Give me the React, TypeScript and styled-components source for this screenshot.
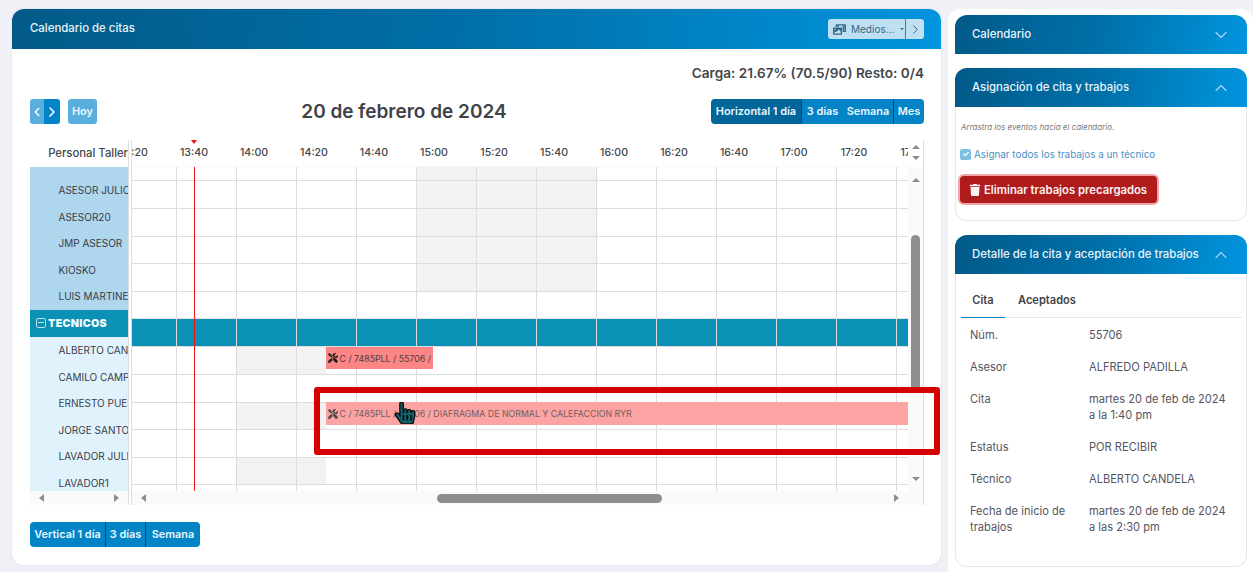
import React from 'react'
import styled, {createGlobalStyle} from 'styled-components'
import {ChevronDown, ChevronLeft, ChevronRight, ChevronUp} from 'lucide-react'
import {FaPhotoVideo, FaTools, FaTrash, FaHandPointer, FaCheck} from 'react-icons/fa'

const GlobalStyle = createGlobalStyle`
  html, body {
    margin: 0;
    padding: 0;
    height: 572px;
    overflow: hidden;
    background: #eff1f6;
    font-family: "Inter", "Open Sans", sans-serif;
  }
  * { box-sizing: border-box; }
`

const HEAD_GRADIENT = 'linear-gradient(100deg, #025a88 0%, #0070a9 50%, #0095de 100%)'

const times = ['13:20', '13:40', '14:00', '14:20', '14:40', '15:00', '15:20', '15:40', '16:00', '16:20', '16:40', '17:00', '17:20', '17:40']

const advisers = ['ASESOR JULIO', 'ASESOR20', 'JMP ASESOR', 'KIOSKO', 'LUIS MARTINEZ']
const technicians = ['ALBERTO CANDELA', 'CAMILO CAMPOS', 'ERNESTO PUENTE', 'JORGE SANTOS', 'LAVADOR JULIO', 'LAVADOR1']

type Shade = 'none' | 'afternoon' | 'morning'

interface RowData {
  height: number
  shade?: Shade
  teal?: boolean
  event?: {top: number; height: number; width: number; faded?: boolean; text: string}
}

const rows: RowData[] = [
  {height: 14, shade: 'afternoon'},
  {height: 28, shade: 'afternoon'},
  {height: 28, shade: 'afternoon'},
  {height: 27, shade: 'afternoon'},
  {height: 28, shade: 'afternoon'},
  {height: 27},
  {height: 28, teal: true},
  {height: 28, shade: 'morning', event: {top: 0, height: 22, width: 107, text: 'C / 7485PLL / 55706 / DIAFRAGMA DE NORMAL Y CALEFACCION RYR'}},
  {height: 28},
  {height: 27, shade: 'morning', event: {top: -1, height: 23, width: 582, faded: true, text: 'C / 7485PLL / 55706 / DIAFRAGMA DE NORMAL Y CALEFACCION RYR'}},
  {height: 28},
  {height: 27, shade: 'morning'},
  {height: 7},
]

const details = [
  {label: 'Núm.', value: ['55706']},
  {label: 'Asesor', value: ['ALFREDO PADILLA']},
  {label: 'Cita', value: ['martes 20 de feb de 2024', 'a la 1:40 pm']},
  {label: 'Estatus', value: ['POR RECIBIR']},
  {label: 'Técnico', value: ['ALBERTO CANDELA']},
  {label: 'Fecha de inicio de trabajos', value: ['martes 20 de feb de 2024', 'a las 2:30 pm']},
]

const cellShade = (shade: Shade | undefined, index: number): string => {
  if (shade === 'afternoon' && index >= 5 && index <= 7) return 'full'
  if (shade === 'morning' && index === 2) return 'full'
  if (shade === 'morning' && index === 3) return 'half'
  return 'none'
}

const App: React.FC = () => {
  return (
    <Screen>
      <GlobalStyle />
      <MainCard>
        <MainHeader>
          <HeaderTitle>Calendario de citas</HeaderTitle>
          <HeaderActions>
            <MediaButton>
              <FaPhotoVideo size={13} />
              <span>Medios...</span>
              <Caret />
            </MediaButton>
            <MediaNext><ChevronRight size={15} strokeWidth={1.6} /></MediaNext>
          </HeaderActions>
        </MainHeader>
        <MainBody>
          <LoadLine>Carga: 21.67% (70.5/90) Resto: 0/4</LoadLine>
          <Toolbar>
            <NavGroup>
              <NavButton $muted><ChevronLeft size={16} strokeWidth={2.4} /></NavButton>
              <NavButton><ChevronRight size={16} strokeWidth={2.4} /></NavButton>
              <TodayButton>Hoy</TodayButton>
            </NavGroup>
            <DateTitle>20 de febrero de 2024</DateTitle>
            <ViewGroup>
              <ViewButton $active $divider $width={91}>Horizontal 1 día</ViewButton>
              <ViewButton $width={41}>3 días</ViewButton>
              <ViewButton $divider $width={51}>Semana</ViewButton>
              <ViewButton $width={30}>Mes</ViewButton>
            </ViewGroup>
          </Toolbar>

          <Scheduler>
            <ResourceColumn>
              <ResourceHead>Personal Taller</ResourceHead>
              <ResourceList>
                <AdviserBlock>
                  {advisers.map((name) => <ResourceRow key={name}>{name}</ResourceRow>)}
                </AdviserBlock>
                <GroupRow><MinusBox />TECNICOS</GroupRow>
                <div>
                  {technicians.map((name) => <ResourceRow key={name}>{name}</ResourceRow>)}
                </div>
              </ResourceList>
              <ScrollTrack>
                <ArrowLeft />
                <ArrowRight />
              </ScrollTrack>
            </ResourceColumn>

            <Splitter />

            <Timeline>
              <TimeHead>
                <TimeTrack>
                  {times.map((t) => <TimeLabel key={t}>{t}</TimeLabel>)}
                </TimeTrack>
                <NowMark />
              </TimeHead>
              <Grid>
                {rows.map((row, i) => (
                  <GridRow key={i} $height={row.height} $teal={row.teal} $last={i === rows.length - 1}>
                    {Array.from({length: 14}).map((_, c) => (
                      <GridCell key={c} $first={c === 0} $end={c === 13} $shade={cellShade(row.shade, c)} />
                    ))}
                    {row.event && (
                      <EventBar $top={row.event.top} $height={row.event.height} $width={row.event.width} $faded={row.event.faded}>
                        <FaTools size={10} />
                        <span>{row.event.text}</span>
                      </EventBar>
                    )}
                  </GridRow>
                ))}
                <NowLine />
              </Grid>
              <ScrollTrack>
                <ArrowLeft />
                <HorizontalThumb />
                <ArrowRight />
              </ScrollTrack>
            </Timeline>

            <VerticalRail>
              <RailHead>
                <ArrowUp />
                <ArrowDown />
              </RailHead>
              <RailTrack>
                <ArrowUp />
                <VerticalThumb />
                <ArrowDown />
              </RailTrack>
            </VerticalRail>
          </Scheduler>

          <FooterViews>
            <ViewButton $divider $width={76}>Vertical 1 día</ViewButton>
            <ViewButton $divider $width={40}>3 días</ViewButton>
            <ViewButton $width={54}>Semana</ViewButton>
          </FooterViews>
        </MainBody>
      </MainCard>

      <SidePanel>
        <SideCard $flat>
          <SideHeader>
            <span>Calendario</span>
            <ChevronDown size={20} strokeWidth={1.4} />
          </SideHeader>
        </SideCard>

        <SideCard $height={153}>
          <SideHeader>
            <span>Asignación de cita y trabajos</span>
            <ChevronUp size={20} strokeWidth={1.4} />
          </SideHeader>
          <HintText>Arrastra los eventos hacia el calendario.</HintText>
          <CheckLine>
            <CheckBox><FaCheck size={6} /></CheckBox>
            Asignar todos los trabajos a un técnico
          </CheckLine>
          <DangerButton><FaTrash size={12} />Eliminar trabajos precargados</DangerButton>
        </SideCard>

        <SideCard $height={332}>
          <SideHeader>
            <span>Detalle de la cita y aceptación de trabajos</span>
            <ChevronUp size={20} strokeWidth={1.4} />
          </SideHeader>
          <Tabs>
            <Tab $active>Cita</Tab>
            <Tab>Aceptados</Tab>
          </Tabs>
          <DetailList>
            {details.map((d) => (
              <DetailRow key={d.label}>
                <DetailLabel>{d.label}</DetailLabel>
                <DetailValue>
                  {d.value.map((line) => <div key={line}>{line}</div>)}
                </DetailValue>
              </DetailRow>
            ))}
          </DetailList>
        </SideCard>
      </SidePanel>

      <Highlight />
      <HandCursor><FaHandPointer size={22} /></HandCursor>
    </Screen>
  )
}

const Screen = styled.div`
  position: relative;
  display: flex;
  gap: 7px;
  height: 572px;
  padding: 9px 0 0 12px;
`

const MainCard = styled.section`
  width: 929px;
  height: 556px;
  background: #fff;
  border-radius: 12px;
  overflow: hidden;
  box-shadow: 0 0 0 1px #e6e9ef;
`

const MainHeader = styled.header`
  display: flex;
  align-items: center;
  justify-content: space-between;
  height: 40px;
  padding: 0 17px 0 18px;
  background: ${HEAD_GRADIENT};
`

const HeaderTitle = styled.div`
  margin-bottom: 2px;
  color: #e9f4fa;
  font-size: 11.4px;
  font-weight: 500;
`

const HeaderActions = styled.div`
  display: flex;
  gap: 1px;
`

const MediaButton = styled.div`
  display: flex;
  align-items: center;
  gap: 5px;
  width: 77px;
  height: 20px;
  padding-left: 5px;
  background: #bfdff2;
  border-radius: 3px 0 0 3px;
  color: #33688a;
  font-size: 10px;
  font-weight: 400;
`

const Caret = styled.i`
  width: 0;
  height: 0;
  margin-left: 1px;
  border: 2.5px solid transparent;
  border-top-color: #33688a;
  border-bottom: 0;
`

const MediaNext = styled.div`
  display: flex;
  align-items: center;
  justify-content: center;
  width: 18px;
  height: 20px;
  background: #bfdff2;
  border-radius: 0 3px 3px 0;
  color: #33688a;
`

const MainBody = styled.div`
  padding: 14px 17px 0 18px;
`

const LoadLine = styled.div`
  height: 20px;
  line-height: 20px;
  text-align: right;
  color: #43464b;
  font-size: 13.6px;
  font-weight: 600;
`

const Toolbar = styled.div`
  display: flex;
  align-items: center;
  justify-content: space-between;
  height: 25px;
  margin-top: 16px;
`

const NavGroup = styled.div`
  display: flex;
  align-items: stretch;
  height: 25px;
`

const NavButton = styled.div<{$muted?: boolean}>`
  display: flex;
  align-items: center;
  justify-content: center;
  width: ${(p) => (p.$muted ? 14 : 16)}px;
  background: ${(p) => (p.$muted ? '#58afdc' : '#0284c7')};
  border-radius: ${(p) => (p.$muted ? '3px 0 0 3px' : '0 3px 3px 0')};
  color: #fff;
`

const TodayButton = styled.div`
  display: flex;
  align-items: center;
  justify-content: center;
  width: 29px;
  margin-left: 8px;
  padding-bottom: 1px;
  background: #58afdc;
  border-radius: 3px;
  color: #eaf6fc;
  font-size: 11px;
  font-weight: 600;
`

const DateTitle = styled.h2`
  margin: 0;
  color: #3f4247;
  font-size: 19px;
  font-weight: 600;
`

const ViewGroup = styled.div`
  display: flex;
  height: 25px;
  border-radius: 4px;
  overflow: hidden;
`

const FooterViews = styled(ViewGroup)`
  width: 170px;
  margin-top: 17px;
`

const ViewButton = styled.div<{$active?: boolean; $divider?: boolean; $width: number}>`
  display: flex;
  align-items: center;
  justify-content: center;
  width: ${(p) => p.$width}px;
  padding-bottom: 1px;
  background: ${(p) => (p.$active ? '#02669b' : '#0284c7')};
  border-right: ${(p) => (p.$divider ? '1px solid #024a70' : '0')};
  color: #e8f6fe;
  font-size: 10.9px;
  font-weight: 600;
  white-space: nowrap;
`

const Scheduler = styled.div`
  display: flex;
  height: 365px;
  margin-top: 16px;
  border-right: 1px solid #dddddd;
`

const ResourceColumn = styled.div`
  display: flex;
  flex-direction: column;
  width: 98px;
`

const ResourceHead = styled.div`
  display: flex;
  align-items: center;
  justify-content: flex-end;
  height: 25px;
  margin-bottom: 2px;
  color: #43464b;
  font-size: 11.3px;
  font-weight: 500;
  white-space: nowrap;
`

const ResourceList = styled.div`
  flex: 1;
  overflow: hidden;
  background: #e0f3fc;
`

const AdviserBlock = styled.div`
  height: 143px;
  padding-top: 10px;
  background: #aed6ed;
`

const ResourceRow = styled.div`
  height: 26.6px;
  line-height: 26px;
  padding-left: 28.5px;
  color: #3b3b4a;
  font-size: 10px;
  white-space: nowrap;
  overflow: hidden;
`

const GroupRow = styled.div`
  display: flex;
  align-items: center;
  gap: 2px;
  height: 27px;
  padding-left: 6px;
  padding-bottom: 1px;
  background: #0a91b5;
  color: #f2fbfe;
  font-size: 10.7px;
  font-weight: 900;
  letter-spacing: 0.3px;
`

const MinusBox = styled.i`
  position: relative;
  width: 10px;
  height: 10px;
  border: 1px solid #bfe0ea;
  border-radius: 2px;

  &::after {
    content: '';
    position: absolute;
    left: 1px;
    right: 1px;
    top: 3px;
    height: 1px;
    background: #bfe0ea;
  }
`

const Splitter = styled.div`
  width: 4px;
  border-left: 1px solid #dddddd;
  border-right: 1px solid #dddddd;
`

const Timeline = styled.div`
  display: flex;
  flex-direction: column;
  width: 776px;
`

const TimeHead = styled.div`
  position: relative;
  height: 27px;
  overflow: hidden;
  border-bottom: 1px solid #f7f7f7;
`

const TimeTrack = styled.div`
  display: flex;
  margin-left: -28px;
  height: 26px;
`

const TimeLabel = styled.div`
  flex: 0 0 60px;
  line-height: 25px;
  text-align: center;
  color: #43464b;
  font-size: 10.6px;
  font-weight: 500;
`

const NowMark = styled.i`
  position: absolute;
  left: 59px;
  top: 0;
  width: 0;
  height: 0;
  border: 3px solid transparent;
  border-top: 4px solid #e81c1c;
  border-bottom: 0;
`

const Grid = styled.div`
  position: relative;
  height: 324px;
  overflow: hidden;
`

const GridRow = styled.div<{$height: number; $teal?: boolean; $last?: boolean}>`
  position: relative;
  display: flex;
  height: ${(p) => p.$height}px;
  background: ${(p) => (p.$teal ? '#0a91b5' : '#fff')};
  border-bottom: ${(p) => (p.$last ? '0' : '1px solid #dddddd')};
`

const GridCell = styled.div<{$first?: boolean; $end?: boolean; $shade: string}>`
  flex: 0 0 ${(p) => (p.$first ? 45 : p.$end ? 11 : 60)}px;
  border-right: ${(p) => (p.$end ? '0' : '1px solid #dddddd')};
  background: ${(p) =>
    p.$shade === 'full'
      ? '#f2f2f2'
      : p.$shade === 'half'
        ? 'linear-gradient(to right, #f2f2f2 29px, transparent 29px)'
        : 'transparent'};
`

const EventBar = styled.div<{$top: number; $height: number; $width: number; $faded?: boolean}>`
  position: absolute;
  z-index: 1;
  left: 194px;
  top: ${(p) => p.$top}px;
  display: flex;
  align-items: center;
  gap: 1.5px;
  height: ${(p) => p.$height}px;
  width: ${(p) => p.$width}px;
  padding-left: 2px;
  overflow: hidden;
  white-space: nowrap;
  background: ${(p) => (p.$faded ? '#fca3a3' : '#fc8585')};
  color: ${(p) => (p.$faded ? '#6f6060' : '#4e3f3f')};
  font-size: 8.8px;

  svg {
    flex: none;
    color: ${(p) => (p.$faded ? '#4a4a4a' : '#222')};
  }
`

const NowLine = styled.i`
  position: absolute;
  left: 62px;
  top: 0;
  bottom: 0;
  width: 1px;
  background: #f01414;
`

const ScrollTrack = styled.div`
  position: relative;
  display: flex;
  align-items: center;
  justify-content: space-between;
  height: 14px;
  padding: 0 9px;
  background: #fafafa;
`

const ArrowLeft = styled.i`
  width: 0;
  height: 0;
  border: 4px solid transparent;
  border-right: 5px solid #8c8c8c;
  border-left: 0;
`

const ArrowRight = styled.i`
  width: 0;
  height: 0;
  border: 4px solid transparent;
  border-left: 5px solid #8c8c8c;
  border-right: 0;
`

const ArrowUp = styled.i`
  flex: none;
  width: 0;
  height: 0;
  border: 4px solid transparent;
  border-bottom: 4px solid #8c8c8c;
  border-top: 0;
`

const ArrowDown = styled.i`
  flex: none;
  width: 0;
  height: 0;
  border: 4px solid transparent;
  border-top: 4px solid #8c8c8c;
  border-bottom: 0;
`

const HorizontalThumb = styled.div`
  position: absolute;
  left: 305px;
  top: 3px;
  width: 225px;
  height: 9px;
  border-radius: 5px;
  background: #8e8e8e;
`

const VerticalRail = styled.div`
  display: flex;
  flex-direction: column;
  width: 15px;
`

const RailHead = styled.div`
  display: flex;
  flex-direction: column;
  align-items: center;
  gap: 7px;
  height: 27px;
  padding-top: 5px;
  background: #fff;
`

const RailTrack = styled.div`
  position: relative;
  display: flex;
  flex-direction: column;
  align-items: center;
  justify-content: space-between;
  height: 338px;
  padding: 11px 0 24px;
  background: #fafafa;
`

const VerticalThumb = styled.div`
  position: absolute;
  left: 3px;
  top: 68px;
  width: 9px;
  height: 155px;
  border-radius: 5px 5px 0 0;
  background: #8e8e8e;
`

const SidePanel = styled.aside`
  flex: 1;
  display: flex;
  flex-direction: column;
  gap: 14px;
  min-height: 563px;
  padding: 6px 6px 0 7px;
  background: #fff;
  border-radius: 12px 12px 0 0;
`

const SideCard = styled.div<{$flat?: boolean; $height?: number}>`
  flex: none;
  height: ${(p) => (p.$height ? `${p.$height}px` : 'auto')};
  border-radius: ${(p) => (p.$flat ? '12px 12px 0 0' : '12px')};
  box-shadow: ${(p) => (p.$flat ? 'none' : 'inset 0 0 0 1px #e4e7ee')};
  overflow: hidden;
`

const SideHeader = styled.div`
  display: flex;
  align-items: center;
  justify-content: space-between;
  height: 39px;
  padding: 0 16px 2px 17px;
  background: ${HEAD_GRADIENT};
  color: #e9f4fa;
  font-size: 11.4px;
  font-weight: 500;

  svg {
    color: #a5d6f5;
    margin-top: 2px;
  }
`

const HintText = styled.div`
  margin: 15px 0 0 6px;
  color: #77797d;
  font-size: 8px;
  font-style: italic;
`

const CheckLine = styled.div`
  display: flex;
  align-items: center;
  gap: 3px;
  margin: 16px 0 0 5px;
  color: #4b92c5;
  font-size: 9.9px;
`

const CheckBox = styled.span`
  display: flex;
  align-items: center;
  justify-content: center;
  width: 11px;
  height: 11px;
  border-radius: 2px;
  background: #7fbfe3;
  color: #fff;
`

const DangerButton = styled.div`
  display: flex;
  align-items: center;
  gap: 3px;
  width: 197px;
  height: 27px;
  margin: 16px 0 0 5px;
  padding-left: 9px;
  background: #b01c1c;
  border-radius: 4px;
  box-shadow: 0 0 0 2px #f0a6a6;
  color: #fdf3f3;
  font-size: 11.3px;
  font-weight: 600;
`

const Tabs = styled.div`
  display: flex;
  margin: 16px 5px 0 6px;
  height: 28px;
  border-bottom: 1px solid #e2e6ee;
`

const Tab = styled.div<{$active?: boolean}>`
  width: ${(p) => (p.$active ? '44px' : 'auto')};
  margin-left: ${(p) => (p.$active ? 0 : 13)}px;
  height: 28px;
  line-height: 21px;
  text-align: center;
  border-bottom: ${(p) => (p.$active ? '1px solid #0284c7' : '0')};
  color: #3f4247;
  font-size: 11.1px;
  font-weight: 600;
`

const DetailList = styled.div`
  padding: 9px 0 0 15px;
`

const DetailRow = styled.div`
  display: grid;
  grid-template-columns: 119px 1fr;
  padding-bottom: 16px;
`

const DetailLabel = styled.div`
  padding-right: 14px;
  color: #55555f;
  font-size: 11.1px;
  line-height: 16px;
`

const DetailValue = styled(DetailLabel)`
  padding-right: 0;
`

const Highlight = styled.div`
  position: absolute;
  z-index: 2;
  left: 314px;
  top: 387px;
  width: 626px;
  height: 68px;
  border: 6px solid #d50000;
  border-radius: 3px;
`

const HandCursor = styled.div`
  position: absolute;
  z-index: 3;
  left: 394px;
  top: 402px;
  color: #12616a;

  svg {
    display: block;
    stroke: #0a0a0a;
    stroke-width: 30px;
  }
`

export default App
